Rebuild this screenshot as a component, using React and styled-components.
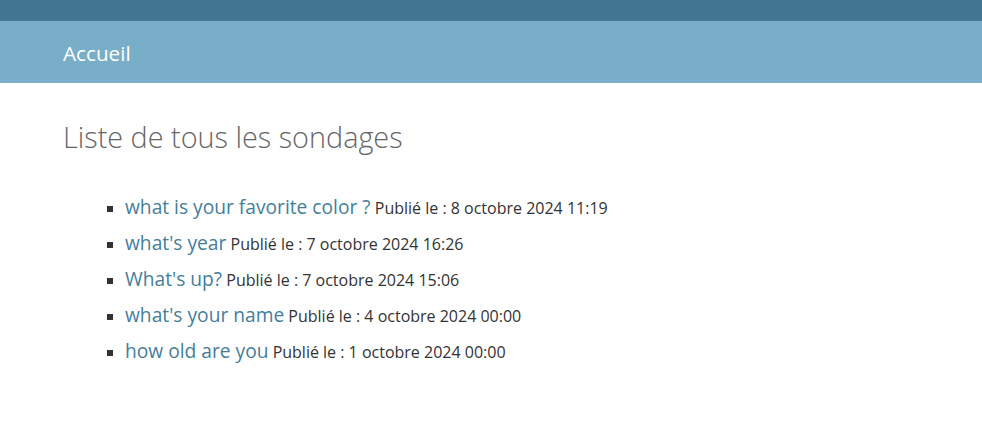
import styled, { createGlobalStyle } from "styled-components";

const GlobalStyle = createGlobalStyle`
  body {
    margin: 0;
    background: #fff;
    font-family: "Open Sans", "Noto Sans", sans-serif;
    color: #333;
  }
`;

const TopBar = styled.div`
  height: 21px;
  background: #417690;
`;

const Breadcrumbs = styled.nav`
  height: 62px;
  box-sizing: border-box;
  padding: 2px 63px 0;
  background: #79aec8;
  display: flex;
  align-items: center;
  color: #fff;
  font-size: 20.7px;
`;

const Content = styled.main`
  padding: 34px 63px;
`;

const Title = styled.h1`
  margin: 0 0 32px;
  font-size: 28.8px;
  font-weight: 300;
  color: #666;
  line-height: 40px;
`;

const PollList = styled.ul`
  margin: 0;
  padding-left: 62px;
  list-style: square;
`;

const PollItem = styled.li`
  height: 36px;
  line-height: 36px;
  font-size: 16px;
  &::marker {
    color: #333;
  }
`;

const PollLink = styled.a`
  color: #447e9b;
  text-decoration: none;
  font-size: 19.2px;
`;

const polls = [
  { id: 1, question: "what is your favorite color ?", date: "8 octobre 2024 11:19" },
  { id: 2, question: "what's year", date: "7 octobre 2024 16:26" },
  { id: 3, question: "What's up?", date: "7 octobre 2024 15:06" },
  { id: 4, question: "what's your name", date: "4 octobre 2024 00:00" },
  { id: 5, question: "how old are you", date: "1 octobre 2024 00:00" },
];

export default function App() {
  return (
    <>
      <GlobalStyle />
      <TopBar />
      <Breadcrumbs>Accueil</Breadcrumbs>
      <Content>
        <Title>Liste de tous les sondages</Title>
        <PollList>
          {polls.map((p) => (
            <PollItem key={p.id}>
              <PollLink href="#">{p.question}</PollLink> Publié le : {p.date}
            </PollItem>
          ))}
        </PollList>
      </Content>
    </>
  );
}
